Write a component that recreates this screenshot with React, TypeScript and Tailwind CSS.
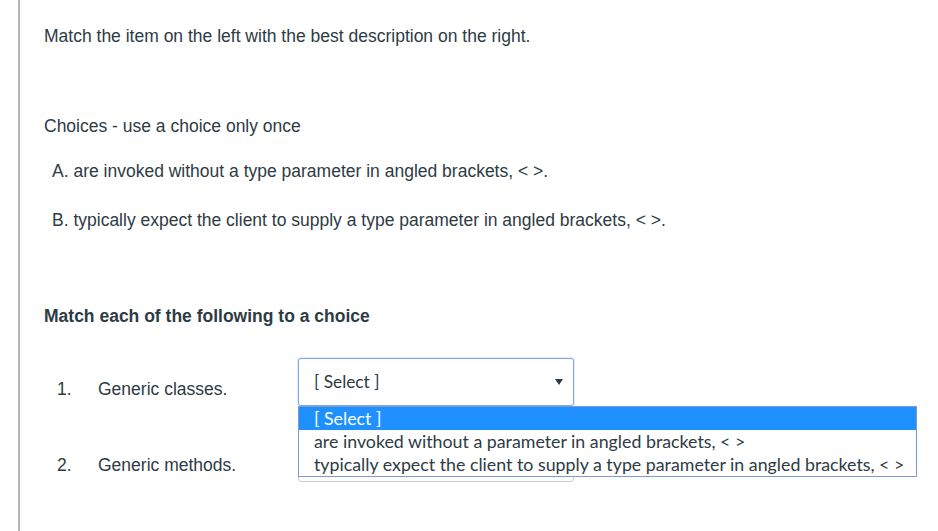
const bodyFont = { fontFamily: '"Liberation Sans", Arial, sans-serif' };
const selectFont = { fontFamily: 'Lato, "Liberation Sans", sans-serif' };

const options = [
  '[ Select ]',
  'are invoked without a parameter in angled brackets, < >',
  'typically expect the client to supply a type parameter in angled brackets, < >',
];

function Caret() {
  return (
    <svg width="8" height="6" viewBox="0 0 8 6" aria-hidden="true">
      <path d="M0 0h8L4 6z" fill="#2d3b45" />
    </svg>
  );
}

function SelectBox({ open }: { open?: boolean }) {
  return (
    <div className="relative">
      <div
        className={
          open
            ? 'flex h-[48px] w-[276px] items-center justify-between rounded-[3px] border border-[#7fa6e5] bg-white pl-[15px] pr-[10px] shadow-[0_0_0_1px_#e3ecfa]'
            : 'flex h-[48px] w-[276px] items-center justify-between rounded-[3px] border border-[#c7cdd1] bg-white pl-[15px] pr-[10px]'
        }
      >
        <span className="text-[17.3px] text-[#2d3b45]" style={selectFont}>
          {options[0]}
        </span>
        <Caret />
      </div>
      {open && (
        <ul
          className="absolute left-0 top-[48px] z-10 w-[619px] border border-[#7a9cd3] bg-white text-[17.8px] leading-[23px] text-[#2d3b45]"
          style={selectFont}
        >
          {options.map((o, i) => (
            <li
              key={i}
              className={i === 0 ? 'bg-[#1e90ff] pl-[15px] text-white' : 'pl-[15px]'}
            >
              {o}
            </li>
          ))}
        </ul>
      )}
    </div>
  );
}

export default function App() {
  return (
    <div className="min-h-[531px] bg-white text-[17.5px] text-[#2d3b45]" style={bodyFont}>
      <div className="ml-[18px] min-h-[531px] border-l-2 border-[#b5b5b5] pl-[24px] pt-[26px]">
        <p className="leading-[20px]">Match the item on the left with the best description on the right.</p>

        <p className="mt-[70px] leading-[20px]">Choices - use a choice only once</p>

        <div className="mt-[25px] flex flex-col gap-[29px] pl-[8px] leading-[20px]">
          <p>A. are invoked without a type parameter in angled brackets, &lt; &gt;.</p>
          <p>B. typically expect the client to supply a type parameter in angled brackets, &lt; &gt;.</p>
        </div>

        <p className="mt-[76px] font-bold leading-[20px]">Match each of the following to a choice</p>

        <div className="mt-[32px] flex flex-col gap-[28px]">
          <div className="flex items-center">
            <span className="mt-[14px] w-[54px] pl-[13px] leading-[20px]">1.</span>
            <span className="mt-[14px] w-[200px] leading-[20px]">Generic classes.</span>
            <SelectBox open />
          </div>
          <div className="flex items-center">
            <span className="mt-[14px] w-[54px] pl-[13px] leading-[20px]">2.</span>
            <span className="mt-[14px] w-[200px] leading-[20px]">Generic methods.</span>
            <SelectBox />
          </div>
        </div>
      </div>
    </div>
  );
}
